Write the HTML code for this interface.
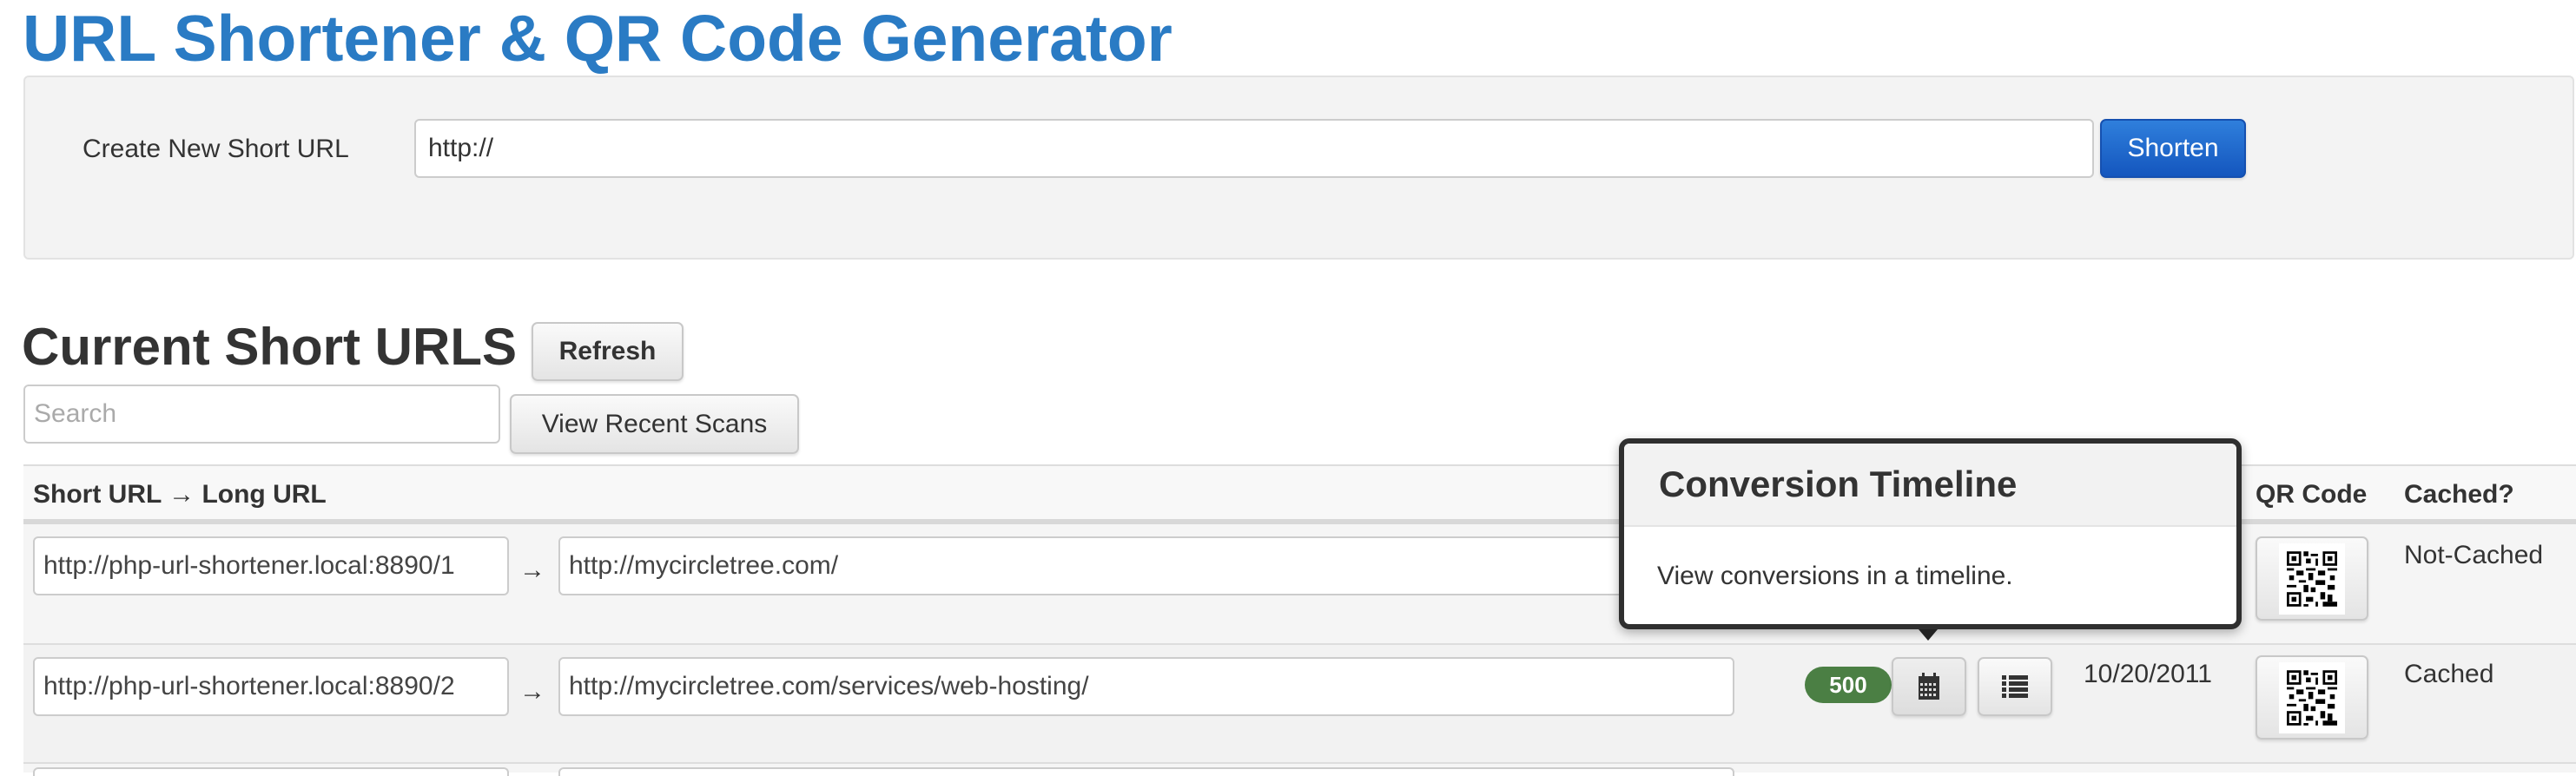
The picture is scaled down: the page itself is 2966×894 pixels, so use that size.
<!DOCTYPE html>
<html><head><meta charset="utf-8"><style>
*{box-sizing:border-box;margin:0;padding:0}
body{width:2966px;height:890px;overflow:hidden;background:#fff;font-family:"Liberation Sans",Helvetica,Arial,sans-serif;color:#333;position:relative}
.a{position:absolute}
.inp{position:absolute;background:#fff;border:2px solid #ccc;border-radius:6px;font-size:30px;color:#444;padding-left:14px;display:flex;align-items:center;white-space:nowrap;overflow:hidden}
.btn{position:absolute;border:2px solid #c8c8c8;border-radius:7px;background:linear-gradient(#fafafa,#e4e4e4);display:flex;align-items:center;justify-content:center;box-shadow:0 2px 3px rgba(0,0,0,.12);font-size:30px;color:#333}
</style></head><body>
<div class="a" style="left:26px;top:1px;font-size:75px;font-weight:bold;color:#2a7bc4;white-space:nowrap">URL Shortener &amp; QR Code Generator</div>
<div class="a" style="left:27px;top:87px;width:2937px;height:212px;background:#f3f3f3;border:2px solid #e2e2e2;border-radius:6px"></div>
<div class="a" style="left:95px;top:155px;font-size:30px;color:#333">Create New Short URL</div>
<div class="inp" style="left:477px;top:137px;width:1934px;height:68px;color:#333">http://</div>
<div class="btn" style="left:2418px;top:137px;width:168px;height:68px;background:linear-gradient(#2f7fdc,#1456be);border-color:#1550b0;color:#fff">Shorten</div>

<div class="a" style="left:25px;top:365px;font-size:60px;font-weight:bold;color:#333;white-space:nowrap">Current Short URLS</div>
<div class="btn" style="left:612px;top:371px;width:175px;height:68px;font-weight:bold">Refresh</div>
<div class="inp" style="left:27px;top:443px;width:549px;height:68px;color:#aaa;padding-left:10px">Search</div>
<div class="btn" style="left:587px;top:454px;width:333px;height:69px">View Recent Scans</div>

<div class="a" style="left:27px;top:535px;width:2939px;height:69px;background:#f8f8f8;border-top:2px solid #ddd;border-bottom:6px solid #d8d8d8"></div>
<div class="a" style="left:38px;top:553px;font-size:30px;font-weight:bold">Short URL → Long URL</div>
<div class="a" style="left:2597px;top:553px;font-size:30px;font-weight:bold">QR Code</div>
<div class="a" style="left:2768px;top:553px;font-size:30px;font-weight:bold">Cached?</div>

<div class="a" style="left:27px;top:604px;width:2939px;height:139px;background:#f5f5f5;border-bottom:2px solid #ddd"></div>
<div class="a" style="left:27px;top:743px;width:2939px;height:137px;background:#f2f2f2;border-bottom:2px solid #ddd"></div>
<div class="a" style="left:27px;top:880px;width:2939px;height:10px;background:#f5f5f5"></div>
<div class="a" style="left:38px;top:884px;width:548px;height:10px;background:#fff;border:2px solid #ccc;border-bottom:none;border-radius:6px 6px 0 0"></div>
<div class="a" style="left:643px;top:884px;width:1354px;height:10px;background:#fff;border:2px solid #ccc;border-bottom:none;border-radius:6px 6px 0 0"></div>

<div class="inp" style="left:38px;top:618px;width:548px;height:68px;padding-left:10px">http://php-url-shortener.local:8890/1</div>
<div class="a" style="left:598px;top:640px;font-size:30px">→</div>
<div class="inp" style="left:643px;top:618px;width:1354px;height:68px;padding-left:10px">http://mycircletree.com/</div>
<div class="inp" style="left:38px;top:757px;width:548px;height:68px;padding-left:10px">http://php-url-shortener.local:8890/2</div>
<div class="a" style="left:598px;top:780px;font-size:30px">→</div>
<div class="inp" style="left:643px;top:757px;width:1354px;height:68px;padding-left:10px">http://mycircletree.com/services/web-hosting/</div>

<div class="a" style="left:2078px;top:768px;width:100px;height:42px;background:#4b7f44;border-radius:21px;color:#fff;font-weight:bold;font-size:26px;display:flex;align-items:center;justify-content:center">500</div>
<div class="btn" style="left:2178px;top:757px;width:86px;height:68px;background:linear-gradient(#eee,#ddd)">
<svg width="28" height="32" viewBox="0 0 28 32"><rect x="2" y="4" width="24" height="27" fill="#333"/><rect x="6" y="0" width="3" height="6" fill="#333"/><rect x="19" y="0" width="3" height="6" fill="#333"/><g fill="#ddd"><rect x="4" y="12" width="3" height="3"/><rect x="9" y="12" width="3" height="3"/><rect x="14" y="12" width="3" height="3"/><rect x="19" y="12" width="3" height="3"/><rect x="4" y="18" width="3" height="3"/><rect x="9" y="18" width="3" height="3"/><rect x="14" y="18" width="3" height="3"/><rect x="19" y="18" width="3" height="3"/><rect x="4" y="24" width="3" height="3"/><rect x="9" y="24" width="3" height="3"/><rect x="14" y="24" width="3" height="3"/><rect x="19" y="24" width="3" height="3"/></g></svg></div>
<div class="btn" style="left:2277px;top:757px;width:86px;height:68px">
<svg width="30" height="30" viewBox="0 0 30 30" fill="#333"><rect x="0" y="2" width="5" height="5"/><rect x="8" y="2" width="22" height="5"/><rect x="0" y="9" width="5" height="5"/><rect x="8" y="9" width="22" height="5"/><rect x="0" y="16" width="5" height="5"/><rect x="8" y="16" width="22" height="5"/><rect x="0" y="23" width="5" height="5"/><rect x="8" y="23" width="22" height="5"/></svg></div>
<div class="a" style="left:2399px;top:760px;font-size:30px">10/20/2011</div>

<div class="btn" style="left:2597px;top:618px;width:130px;height:97px"><div style="width:76px;height:82px;background:#fff;display:flex;align-items:center;justify-content:center"><svg width="58" height="64" viewBox="0 0 21 23"><g fill="none" stroke="#000" stroke-width="1"><rect x="0.5" y="0.5" width="5" height="5"/><rect x="15.5" y="0.5" width="5" height="5"/><rect x="0.5" y="17.5" width="5" height="5"/></g><g fill="#000"><rect x="2" y="2" width="2" height="2"/><rect x="17" y="2" width="2" height="2"/><rect x="2" y="19" width="2" height="2"/><rect x="7" y="0" width="2" height="2"/><rect x="10" y="1" width="3" height="1"/><rect x="8" y="3" width="2" height="2"/><rect x="12" y="3" width="1" height="3"/><rect x="0" y="7" width="3" height="1"/><rect x="4" y="8" width="3" height="2"/><rect x="8" y="7" width="4" height="1"/><rect x="13" y="8" width="3" height="2"/><rect x="17" y="7" width="4" height="1"/><rect x="1" y="10" width="2" height="2"/><rect x="9" y="9" width="2" height="3"/><rect x="18" y="10" width="2" height="2"/><rect x="5" y="12" width="3" height="1"/><rect x="12" y="12" width="4" height="2"/><rect x="0" y="14" width="4" height="1"/><rect x="7" y="14" width="2" height="3"/><rect x="17" y="14" width="3" height="2"/><rect x="10" y="15" width="2" height="2"/><rect x="14" y="17" width="2" height="3"/><rect x="8" y="19" width="3" height="2"/><rect x="17" y="18" width="2" height="3"/><rect x="12" y="21" width="1" height="2"/><rect x="7" y="22" width="2" height="1"/><rect x="15" y="21" width="6" height="2"/></g></svg></div></div>
<div class="btn" style="left:2597px;top:755px;width:130px;height:97px"><div style="width:76px;height:82px;background:#fff;display:flex;align-items:center;justify-content:center"><svg width="58" height="64" viewBox="0 0 21 23"><g fill="none" stroke="#000" stroke-width="1"><rect x="0.5" y="0.5" width="5" height="5"/><rect x="15.5" y="0.5" width="5" height="5"/><rect x="0.5" y="17.5" width="5" height="5"/></g><g fill="#000"><rect x="2" y="2" width="2" height="2"/><rect x="17" y="2" width="2" height="2"/><rect x="2" y="19" width="2" height="2"/><rect x="7" y="0" width="2" height="2"/><rect x="10" y="1" width="3" height="1"/><rect x="8" y="3" width="2" height="2"/><rect x="12" y="3" width="1" height="3"/><rect x="0" y="7" width="3" height="1"/><rect x="4" y="8" width="3" height="2"/><rect x="8" y="7" width="4" height="1"/><rect x="13" y="8" width="3" height="2"/><rect x="17" y="7" width="4" height="1"/><rect x="1" y="10" width="2" height="2"/><rect x="9" y="9" width="2" height="3"/><rect x="18" y="10" width="2" height="2"/><rect x="5" y="12" width="3" height="1"/><rect x="12" y="12" width="4" height="2"/><rect x="0" y="14" width="4" height="1"/><rect x="7" y="14" width="2" height="3"/><rect x="17" y="14" width="3" height="2"/><rect x="10" y="15" width="2" height="2"/><rect x="14" y="17" width="2" height="3"/><rect x="8" y="19" width="3" height="2"/><rect x="17" y="18" width="2" height="3"/><rect x="12" y="21" width="1" height="2"/><rect x="7" y="22" width="2" height="1"/><rect x="15" y="21" width="6" height="2"/></g></svg></div></div>
<div class="a" style="left:2768px;top:623px;font-size:30px">Not-Cached</div>
<div class="a" style="left:2768px;top:760px;font-size:30px">Cached</div>

<div class="a" style="left:1864px;top:505px;width:717px;height:220px;background:#fff;border:6px solid #2f2f2f;border-radius:12px;overflow:hidden;box-shadow:0 4px 12px rgba(0,0,0,.3)">
<div style="height:96px;background:#f2f2f2;border-bottom:2px solid #e4e4e4;padding-left:40px;display:flex;align-items:center;font-size:42px;font-weight:bold;color:#333">Conversion Timeline</div>
<div style="padding-left:38px;padding-top:40px;font-size:30px;color:#333">View conversions in a timeline.</div>
</div>
<div class="a" style="left:2209px;top:725px;width:0;height:0;border-left:11px solid transparent;border-right:11px solid transparent;border-top:13px solid #222"></div>
</body></html>
